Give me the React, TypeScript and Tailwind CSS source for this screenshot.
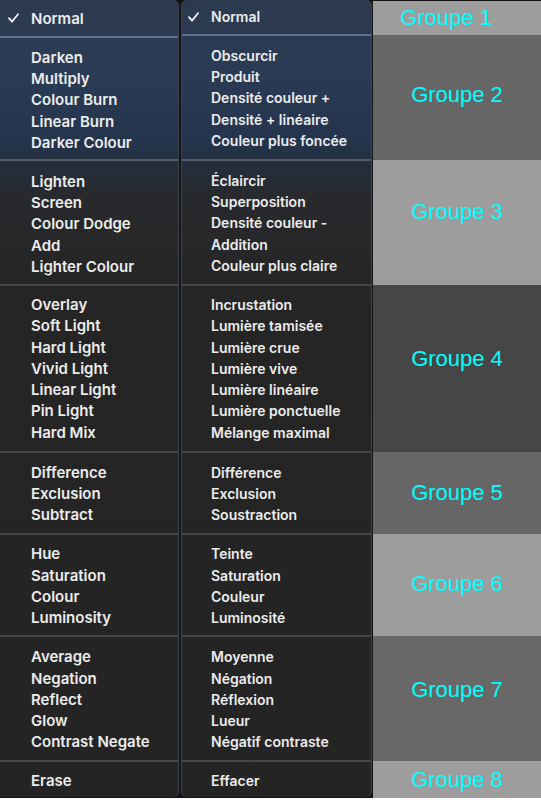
import React from 'react'

const leftGroups: string[][] = [
    ['Normal'],
    ['Darken', 'Multiply', 'Colour Burn', 'Linear Burn', 'Darker Colour'],
    ['Lighten', 'Screen', 'Colour Dodge', 'Add', 'Lighter Colour'],
    ['Overlay', 'Soft Light', 'Hard Light', 'Vivid Light', 'Linear Light', 'Pin Light', 'Hard Mix'],
    ['Difference', 'Exclusion', 'Subtract'],
    ['Hue', 'Saturation', 'Colour', 'Luminosity'],
    ['Average', 'Negation', 'Reflect', 'Glow', 'Contrast Negate'],
    ['Erase'],
]

const middleGroups: string[][] = [
    ['Normal'],
    ['Obscurcir', 'Produit', 'Densité couleur +', 'Densité + linéaire', 'Couleur plus foncée'],
    ['Éclaircir', 'Superposition', 'Densité couleur -', 'Addition', 'Couleur plus claire'],
    ['Incrustation', 'Lumière tamisée', 'Lumière crue', 'Lumière vive', 'Lumière linéaire', 'Lumière ponctuelle', 'Mélange maximal'],
    ['Différence', 'Exclusion', 'Soustraction'],
    ['Teinte', 'Saturation', 'Couleur', 'Luminosité'],
    ['Moyenne', 'Négation', 'Réflexion', 'Lueur', 'Négatif contraste'],
    ['Effacer'],
]

// section heights in px, separator included
const leftHeights = [36, 123, 125, 167, 82, 102, 125, 37]
const middleHeights = [34, 125, 125, 167, 82, 102, 125, 37]

const leftSeps = [
    'pt-[1px]',
    'border-t-2 border-[#5e7089] pt-[3px]',
    'border-t-2 border-[#535d6c] pt-[3px]',
    'border-t-2 border-[#464646]',
    'border-t-2 border-[#464646] pt-[1px]',
    'border-t-2 border-[#464646] pt-[2px]',
    'border-t-2 border-[#464646] pt-[2px]',
    'border-t-2 border-[#464646] pt-[2px]',
]

const middleSeps = [
    '',
    'border-t-2 border-[#5e7089] pt-[1px]',
    'border-t-2 border-[#535d6c] pt-[1px]',
    'border-t-2 border-[#464646]',
    'border-t-2 border-[#464646] pt-[1px]',
    'border-t-2 border-[#464646] pt-[2px]',
    'border-t-2 border-[#464646] pt-[2px]',
    'border-t-2 border-[#464646] pt-[2px]',
]

const groupCells = [
    { label: 'Groupe 1', h: 'h-[34px]', bg: 'bg-[#9d9d9d]', extra: 'pr-[22px] pb-[2px]' },
    { label: 'Groupe 2', h: 'h-[125px]', bg: 'bg-[#666666]', extra: 'pb-[7px]' },
    { label: 'Groupe 3', h: 'h-[125px]', bg: 'bg-[#9d9d9d]', extra: 'pb-[22px]' },
    { label: 'Groupe 4', h: 'h-[167px]', bg: 'bg-[#464646]', extra: 'pb-[20px]' },
    { label: 'Groupe 5', h: 'h-[82px]', bg: 'bg-[#666666]', extra: 'pb-[2px]' },
    { label: 'Groupe 6', h: 'h-[102px]', bg: 'bg-[#9d9d9d]', extra: 'pb-[4px]' },
    { label: 'Groupe 7', h: 'h-[125px]', bg: 'bg-[#686868]', extra: 'pb-[18px]' },
    { label: 'Groupe 8', h: 'h-[37px]', bg: 'bg-[#9d9d9d]', extra: '' },
]

function Check() {
    return (
        <svg width="11" height="10" viewBox="0 0 11 10" className="block">
            <polyline points="1,5.2 4,8.6 10,1.2" fill="none" stroke="#f0f0f0" strokeWidth="1.8" strokeLinecap="round" strokeLinejoin="round" />
        </svg>
    )
}

interface MenuProps {
    groups: string[][]
    heights: number[]
    seps: string[]
    className: string
    checkPad: string
}

function Menu({ groups, heights, seps, className, checkPad }: MenuProps) {
    return (
        <div className={className}>
            {groups.map((items, gi) => (
                <div
                    key={gi}
                    className={`flex flex-col justify-center ${seps[gi]}`}
                    style={{ height: heights[gi] }}
                >
                    {items.map((item, i) => (
                        <div key={i} className={`flex items-center leading-[21.3px] ${checkPad}`}>
                            <span className="w-[23px] flex items-center">
                                {gi === 0 && i === 0 ? <Check /> : null}
                            </span>
                            <span className="whitespace-nowrap">{item}</span>
                        </div>
                    ))}
                </div>
            ))}
        </div>
    )
}

export default function App() {
    return (
        <div className="w-[541px] h-[800px] bg-white">
            <div
                className="flex h-[798px] bg-[#141414] font-semibold text-[#ececec]"
                style={{ fontFamily: 'Inter, "Liberation Sans", sans-serif' }}
            >
                <Menu
                    groups={leftGroups}
                    heights={leftHeights}
                    seps={leftSeps}
                    checkPad="pl-[8px]"
                    className="w-[179px] h-[797px] text-[15px] rounded-tr-[6px] rounded-br-[6px] overflow-hidden border-r border-[#3d4350] bg-[linear-gradient(to_bottom,#2d3b50_0px,#2b3c56_70px,#24344c_145px,#242e3d_162px,#28292c_200px,#252525_300px,#242424_100%)]"
                />
                <div className="w-[2px]" />
                <Menu
                    groups={middleGroups}
                    heights={middleHeights}
                    seps={middleSeps}
                    checkPad="pl-[6px]"
                    className="w-[191px] h-[797px] text-[14px] rounded-[6px] overflow-hidden border-l border-r border-[#3d4350] bg-[linear-gradient(to_bottom,#2c3a4f_0px,#2b3b55_70px,#24344c_145px,#242e3d_162px,#28292c_200px,#252525_300px,#242424_100%)]"
                />
                <div className="flex-1 flex flex-col pt-[1px] ml-[1px]">
                    {groupCells.map((g) => (
                        <div
                            key={g.label}
                            className={`${g.h} ${g.bg} ${g.extra} flex items-center justify-center text-[22px] font-normal text-[#00ffff]`}
                            style={{ fontFamily: '"Liberation Sans", Arial, sans-serif' }}
                        >
                            {g.label}
                        </div>
                    ))}
                </div>
            </div>
        </div>
    )
}
